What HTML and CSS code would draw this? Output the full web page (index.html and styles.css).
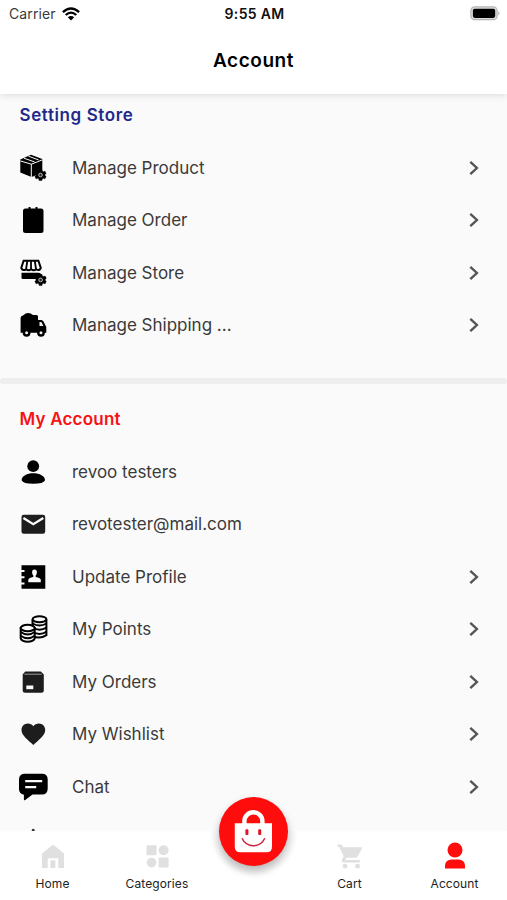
FILE: index.html
```html
<!DOCTYPE html>
<html lang="en">
<head>
<meta charset="utf-8">
<title>Account</title>
<link rel="stylesheet" href="styles.css">
</head>
<body>
<svg class="defs" aria-hidden="true">
  <symbol id="chevron" viewBox="0 0 12 16"><path d="M2.300 1.800 8.900 8 2.300 14.200" fill="none" stroke="#555" stroke-width="2.400"/></symbol>
  <symbol id="gear" viewBox="0 0 12 12"><path d="M4.700.4h2.600l.4 1.700 1 .6 1.700-.5 1.300 2.200L10.500 5.600v.8l1.200 1.200-1.300 2.200-1.700-.5-1 .6-.4 1.700H4.700l-.4-1.700-1-.6-1.700.5L.3 7.600l1.200-1.200v-.8L.3 4.400l1.300-2.200 1.700.5 1-.6z" stroke="#000" stroke-width=".5"/><circle cx="6" cy="6" r="1.800" fill="#222" stroke="#ccc" stroke-width=".9"/></symbol>
</svg>
<div class="screen">
  <header class="header">
    <div class="status">
      <div class="carrier"><span>Carrier</span>
        <svg width="18" height="14" viewBox="0 0 18 14" fill="none" stroke="#000" stroke-width="2.300"><path d="M.9 5.100Q9-2.200 17.100 5.100M3.700 8Q9 3.200 14.300 8"/><path d="M9 13.400 5.800 10.300Q9 7.600 12.200 10.300Z" fill="#000" stroke="none"/></svg>
      </div>
      <div class="time">9:55 AM</div>
      <div class="battery"><svg width="31" height="15" viewBox="0 0 31 15"><rect x=".9" y=".9" width="26.200" height="12.800" rx="3.800" fill="#ddd" stroke="#b4b4b4" stroke-width="1.200"/><rect x="2.900" y="2.700" width="22.300" height="9.200" rx="1.800"/><path d="M28.300 5.200q2.400 2 0 4.200z" fill="#aaa"/></svg></div>
    </div>
    <h1 class="title">Account</h1>
  </header>
  <main class="content">
    <section class="group store">
      <h2 class="heading">Setting Store</h2>
      <div class="row"><svg class="icon" viewBox="0 0 32 32"><path d="M3.300 7.500 14 2.700 25.300 6.900v14L14.500 25 3.300 20.500z"/><path d="M3.300 8.900 14.300 12.200 25.300 7.900M14.300 12v13" fill="none" stroke="#fafafa" stroke-width="1"/><path d="M7 6.200 17.500 9.900M11.500 4.200l10 3.700" fill="none" stroke="#fafafa" stroke-width="1"/><use href="#gear" x="17.500" y="17" width="12" height="12"/></svg><span class="label">Manage Product</span><svg class="chevron"><use href="#chevron"/></svg></div>
      <div class="row"><svg class="icon" viewBox="0 0 32 32"><path d="M8 4.500h3.500V3h2v1.500h5V3h2v1.500H24a2.500 2.500 0 0 1 2.500 2.500v19.500A2.500 2.500 0 0 1 24 29H8.500A2.500 2.500 0 0 1 6 26.500V7a2.500 2.500 0 0 1 2-2.500z"/></svg><span class="label">Manage Order</span><svg class="chevron"><use href="#chevron"/></svg></div>
      <div class="row"><svg class="icon" viewBox="0 0 32 32"><path d="M6.600 3.800h14.800L23.800 11q-1.600 3.300-4.500 1.300-2.600 2-5.100 0-2.700 2-5.200 0-3.200 2-4.700-1.300z" fill="#fafafa" stroke="#000" stroke-width="2"/><path d="M10.300 4 9.100 12M14 4v8M17.800 4l1.200 8" stroke="#000" stroke-width="1.800"/><path d="M4.500 15.800h16.800q3 .2 3 3v3.200H5.800q-1.300 0-1.300-1.500z"/><use href="#gear" x="17.500" y="16.800" width="12.200" height="12.200"/></svg><span class="label">Manage Store</span><svg class="chevron"><use href="#chevron"/></svg></div>
      <div class="row"><svg class="icon" viewBox="0 0 32 32"><path d="M6 6.500Q11 2 16 6h3.500q1.500 0 1.500 1.500V11h3.200q1.500 0 2.300 1.500l2 4q.8 1 .8 2.200v5.100H3.600V9Q3.600 6.700 6 6.500z"/><path d="M22.500 13h1.900l2 3.900h-3.900z" fill="#eee"/><g stroke="#000" stroke-width="2.400" fill="#eee"><circle cx="9.600" cy="23.800" r="2.700"/><circle cx="24" cy="23.800" r="2.700"/></g></svg><span class="label">Manage Shipping ...</span><svg class="chevron"><use href="#chevron"/></svg></div>
    </section>
    <div class="divider"></div>
    <section class="group account">
      <h2 class="heading">My Account</h2>
      <div class="row"><svg class="icon" viewBox="0 0 32 32"><circle cx="16.200" cy="10.200" r="5.900"/><path d="M4.600 24.300C4.600 20 10 17.300 16.300 17.300S28 20 28 24.300Q26.500 27.800 16.300 27.800T4.600 24.300z"/></svg><span class="label">revoo testers</span></div>
      <div class="row"><svg class="icon" viewBox="0 0 32 32"><rect x="4.500" y="6.800" width="23.700" height="19" rx="2.200" fill="#1d1d1d"/><path d="m6.400 10 9.900 6.200L26.300 10" fill="none" stroke="#fafafa" stroke-width="2.300"/></svg><span class="label">revotester@mail.com</span></div>
      <div class="row"><svg class="icon" viewBox="0 0 32 32"><path d="M5 4.200h23.300v23.600H4.500v-4.200h3v-2.100h-3v-4.200h3v-2.100h-3V11h3V8.900h-3V4.200z"/><path d="M11.300 21.200v-2.400q0-1.800 5-2.800v-1.600q-1.200-1-1.200-3 0-2.800 2.400-2.800t2.400 2.800q0 2-1.200 3V16q5.100 1 5.100 2.800v2.400z" fill="#fafafa"/></svg><span class="label">Update Profile</span><svg class="chevron"><use href="#chevron"/></svg></div>
      <div class="row"><svg class="icon" viewBox="0 0 32 32" fill="none" stroke="#000" stroke-width="2"><path d="M15.500 6.200v16.600q7 3.800 13.900-.6V6.200"/><ellipse cx="22.500" cy="6.200" rx="6.900" ry="3"/><path d="M15.600 10.500q7 4 13.800 0M15.600 14.700q7 4 13.800 0M15.600 18.900q7 4 13.800 0"/><path d="M3.700 15v10.500c2 4.200 12 4.200 14 0V15z" fill="#fafafa"/><ellipse cx="10.700" cy="15" rx="7" ry="3.200" fill="#fafafa"/><path d="M3.700 19q7 5 14 0M3.700 22.800q7 5 14 0"/></svg><span class="label">My Points</span><svg class="chevron"><use href="#chevron"/></svg></div>
      <div class="row"><svg class="icon" viewBox="0 0 32 32"><path d="M8.200 5.500h15.600l3 3v15.700q0 2.500-2.500 2.500H8.200q-2.500 0-2.500-2.500V8.500z" fill="#1d1d1d"/><path d="M7.400 8.200h17.300" stroke="#aaa" stroke-width=".9"/><rect x="9.300" y="19.500" width="7" height="3.700" fill="#fafafa"/></svg><span class="label">My Orders</span><svg class="chevron"><use href="#chevron"/></svg></div>
      <div class="row"><svg class="icon" viewBox="0 0 32 32"><path d="M16.300 26.900 14.500 25.300C8.500 19.800 4.500 16.300 4.500 11.900 4.500 8.300 7.300 5.500 10.900 5.500c2.200 0 4.200 1 5.400 2.700C17.600 6.500 19.600 5.500 21.800 5.500c3.600 0 6.400 2.800 6.400 6.400 0 4.400-4 7.900-10 13.400z" fill="#1d1d1d"/></svg><span class="label">My Wishlist</span><svg class="chevron"><use href="#chevron"/></svg></div>
      <div class="row"><svg class="icon" viewBox="0 0 32 32"><path d="M8 2.700h17q5.700 0 5.700 5.700v9.200q0 6-5.700 6h-9.500L7.900 29.200q-1 .4-1-.7v-4.700Q2 22.800 2 18V8.400Q2 2.700 8 2.700z"/><path d="M8.200 10.200h17M8.200 16.100h11" stroke="#fafafa" stroke-width="2.300"/></svg><span class="label">Chat</span><svg class="chevron"><use href="#chevron"/></svg></div>
      <div class="row"><svg class="icon" viewBox="0 0 32 32"><path d="M14.700 9.500V7.300a1.500 1.500 0 0 1 3 0v2.200Q24 11 24 17v8H8v-8Q8 11 14.700 9.500z"/></svg></div>
    </section>
  </main>
  <nav class="nav">
    <div class="tab home"><svg viewBox="0 0 28 28" fill="#e0e0e0"><path d="M3 11.500 12.800 3.500q1.200-1 2.400 0L25 11.500V26h-5.700v-9.800H8.700V26H3z"/><path d="M11.400 18.300h5V26h-5z"/></svg><span>Home</span></div>
    <div class="tab categories"><svg viewBox="0 0 28 28" fill="#e0e0e0"><rect x="3.500" y="3.300" width="10" height="10" rx="1"/><circle cx="20.600" cy="8.300" r="5"/><circle cx="8.500" cy="20.600" r="4.800"/><rect x="15.600" y="15.500" width="10" height="10" rx="1"/></svg><span>Categories</span></div>
    <div class="tab cart"><svg viewBox="0 0 28 28" fill="#e0e0e0"><path d="M1.500 2.500h4.200l1.200 2.700h18.400q1.200.2.700 1.300l-4.300 8q-.8 1.300-2.200 1.300h-9l-1.200 2.300h14.500v2.300H8q-3-.3-2-3l1.700-3.200L3.200 4.900H1.500z"/><circle cx="9" cy="24.200" r="2.400"/><circle cx="21.500" cy="24.200" r="2.400"/></svg><span>Cart</span></div>
    <div class="tab me"><svg viewBox="0 0 28 28" fill="#ff0d0d"><circle cx="14" cy="8" r="7.500"/><path d="M4 26.600v-2.600q0-5.800 6-6.500h8q6 .7 6 6.500v2.600z"/></svg><span>Account</span></div>
    <div class="fab"><svg width="69" height="69" viewBox="0 0 69 69"><path d="M25.400 27.500v-3.300a9 9 0 0 1 18 0v3.300" fill="none" stroke="#fff" stroke-width="4.400"/><path d="M15.800 26.200h37.200v23.500q0 5.500-5.500 5.500H21.300q-5.500 0-5.500-5.500z" fill="#fff"/><rect x="26.400" y="32.300" width="3" height="5.700" rx="1" fill="#e01428"/><rect x="39.200" y="32.300" width="3" height="5.700" rx="1" fill="#e01428"/><path d="M23 41.300q3.500 7.500 11.400 7.500T45.800 41.300" fill="none" stroke="#d0203c" stroke-width="1.500"/></svg></div>
  </nav>
</div>
</body>
</html>
```
FILE: styles.css
```css
* { box-sizing: border-box; }
body { margin: 0; background: #fafafa; font-family: Inter, "Liberation Sans", sans-serif; color: #3a3a3a; }
.defs { position: absolute; width: 0; height: 0; }
.screen { position: relative; width: 507px; height: 900px; overflow: hidden; display: flex; flex-direction: column; }
.header { position: relative; z-index: 1; height: 94px; flex: none; background: #fff; box-shadow: 0 1px 7px rgba(0,0,0,.13); }
.status { display: grid; grid-template-columns: 1fr auto 1fr; align-items: center; height: 27px; padding: 0 7px 0 9px; font-size: 14px; }
.carrier { display: flex; align-items: center; gap: 6px; letter-spacing: .1px; }
.time { font-weight: 600; font-size: 14px; letter-spacing: .3px; color: #111; }
.battery { display: flex; justify-content: flex-end; margin-right: -1px; }
.title { margin: 0; padding-top: 19px; text-align: center; font-size: 19px; line-height: 30px; font-weight: 600; letter-spacing: .55px; color: #000; }
.content { flex: 1; min-height: 0; overflow: hidden; }
.heading { margin: 0; padding-left: 19.5px; font-size: 17px; line-height: 24px; font-weight: 600; }
.store .heading { color: #23298a; padding-top: 9px; height: 47.4px; letter-spacing: .6px; }
.account .heading { color: #f51414; padding-top: 23.5px; height: 61.4px; letter-spacing: .2px; }
.row { display: flex; align-items: center; height: 52.5px; padding: 0 27px 0 17px; }
.icon { width: 32px; height: 32px; flex: none; margin-right: 23px; }
.label { flex: 1; font-size: 17px; line-height: 24px; }
.chevron { width: 12px; height: 16px; }
.divider { height: 6px; margin-top: 26.6px; border-radius: 3px; background: #eee; }
.nav { position: relative; flex: none; height: 69px; display: flex; background: radial-gradient(circle 44px at 254px 1px, transparent 92%, #fff 100%); box-shadow: 0 -2px 4px rgba(255,255,255,.3); }
.tab { display: flex; flex-direction: column; align-items: center; padding-top: 11px; font-size: 12px; line-height: 16px; color: #222; letter-spacing: .1px; }
.tab svg { width: 28px; height: 28px; margin-bottom: 6px; }
.home { width: 105px; }
.categories { width: 104px; }
.cart { width: 105px; margin-left: 88px; }
.me { width: 105px; }
.fab { position: absolute; left: 219.3px; top: -34px; width: 69px; height: 69px; border-radius: 50%; background: #ff0d0d; box-shadow: 0 5px 9px rgba(0,0,0,.28); }
```
